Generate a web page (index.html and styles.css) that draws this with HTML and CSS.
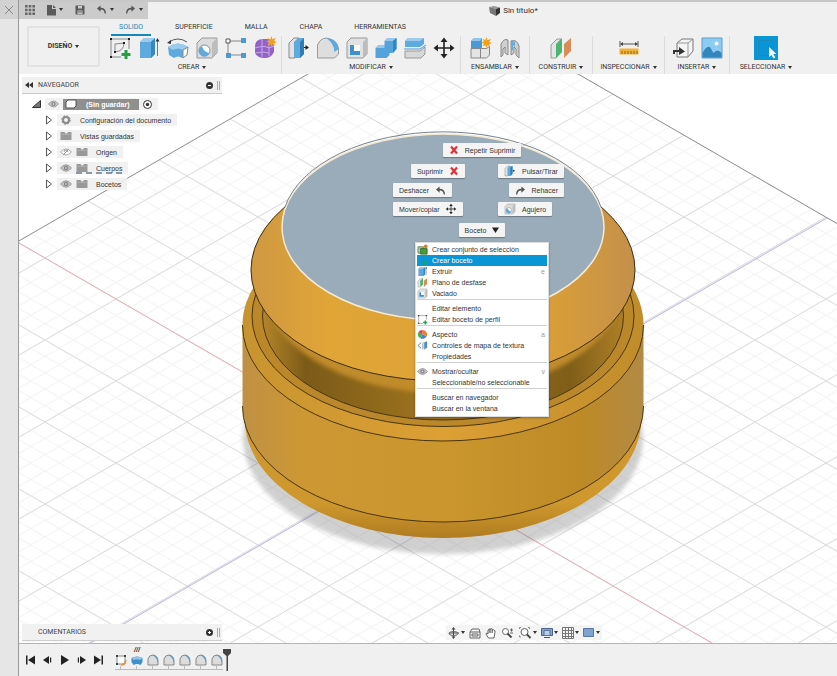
FILE: index.html
```html
<!DOCTYPE html>
<html lang="es">
  <head>
    <meta charset="UTF-8" />
    <meta name="viewport" content="width=device-width, initial-scale=1.0" />
    <title>Sin título*</title>
    <link rel="stylesheet" href="styles.css">
  </head>
  <body>
    <!-- shared icons -->
    <svg class="defs" aria-hidden="true">
      <symbol id="eye" viewBox="0 0 12 8">
        <path d="M0.5 4 Q6 -2.5 11.5 4 Q6 10.5 0.5 4z" fill="#c4c4c4" stroke="#999" />
        <circle cx="6" cy="4" r="2.3" fill="#888" />
        <circle cx="6" cy="4" r="0.8" fill="#eee" />
      </symbol>
      <symbol id="folder" viewBox="0 0 12 10">
        <path d="M0.5 1h4l1 1.5h1.5l1-1.5h3.5v8h-11z" fill="#999" />
        <path d="M0.5 3.5h11" stroke="#b5b5b5" stroke-width="0.7" />
      </symbol>
      <symbol id="arrow" viewBox="0 0 8 10">
        <path d="M1.5 1v8l5-4z" fill="#fff" stroke="#555" />
      </symbol>
      <symbol id="undo" viewBox="0 0 12 10">
        <path d="M5 0.5L1 4l4 3.5V5q4-0.5 4.5 4.5h1.5Q11 3 5 3z" fill="#555" />
      </symbol>
      <symbol id="redo" viewBox="0 0 12 10">
        <path d="M7 0.5L11 4L7 7.5V5Q3 4.5 2.5 9.5H1Q1 3 7 3z" fill="#555" />
      </symbol>
      <symbol id="cross" viewBox="0 0 10 10">
        <path d="M2 1.5L8 8.5M8 1.5L2 8.5" stroke="#e0303a" stroke-width="2.2" />
      </symbol>
      <symbol id="move" viewBox="0 0 24 24">
        <path d="M12 4v16M4 12h16" stroke="#222" stroke-width="1.6" />
        <path d="M12 1.5l3.5 4.5h-7zM12 22.5l3.5-4.5h-7zM1.5 12l4.5-3.5v7zM22.5 12l-4.5-3.5v7z" fill="#222" />
      </symbol>
      <symbol id="extrude" viewBox="0 0 24 24">
        <path d="M3 6l4-4h11v16l-4 4H3z" fill="#5ea9de" />
        <path d="M3 6l4-4h11l-4 4z" fill="#9bccee" />
        <path d="M14 6l4-4v16l-4 4z" fill="#3787c0" />
        <path d="M20.5 20V5" stroke="#777" />
        <path d="M20.5 2l2 3.5h-4z" fill="#333" />
      </symbol>
      <symbol id="press" viewBox="0 0 24 24">
        <path d="M2 7l5-5h5v16l-4 4H2z" fill="#e2e2e2" stroke="#8a8a8a" />
        <path d="M7 6l4-4h6v16l-4 4H7z" fill="#5ea9de" />
        <path d="M13 6l4-4v16l-4 4z" fill="#2f7cb8" />
        <path d="M17 11.5h2" stroke="#222" />
        <path d="M18.5 9l3.5 2.5-3.5 2.5z" fill="#222" />
      </symbol>
      <symbol id="hole" viewBox="0 0 24 24">
        <path d="M2 7l5-5h15v15l-5 5H2z" fill="#dcdcdc" stroke="#999" />
        <path d="M17 7l5-5v15l-5 5z" fill="#bdbdbd" />
        <circle cx="9.5" cy="14.5" r="5.5" fill="#fff" stroke="#888" />
        <path d="M7 10a5.5 5.5 0 1 0 7.500 7q-6-1-7.500-7z" fill="#5ea9de" />
      </symbol>
      <symbol id="shell" viewBox="0 0 24 24">
        <path d="M2 6l4-4h16v16l-4 4H2z" fill="#e2e2e2" stroke="#999" />
        <path d="M18 6l4-4v16l-4 4z" fill="#bdbdbd" />
        <path d="M5 9h10v10H5z" fill="#fff" />
        <path d="M5 9h4v6h6v4H5z" fill="#3f90cb" />
      </symbol>
      <symbol id="sketch" viewBox="0 0 24 24">
        <path d="M3.5 3.5h17v9M3.5 3.5v17h10" fill="none" stroke="#666" />
        <path d="M2 2h3v3H2zM19 2h3v3h-3zM2 19h3v3H2z" fill="#444" />
        <path d="M18 14v9M13.5 18.5h9" stroke="#27a045" stroke-width="3" />
      </symbol>
      <symbol id="planes" viewBox="0 0 24 24">
        <path d="M2 9l6-6h4v13l-5 6H2z" fill="#e4e4e4" stroke="#999" />
        <path d="M7 8l6-6v14l-6 6z" fill="#4cb574" />
        <path d="M15 8l7-6v13l-7 7z" fill="#d68d56" />
      </symbol>
      <symbol id="fillet" viewBox="0 0 12 12">
        <path d="M1 11V5Q2 1 6 1q5 1 5 6v4z" fill="#dcdcdc" stroke="#888" />
        <path d="M5 1q6 0 6 6v2q-1-6-6-8z" fill="#4a98ce" />
      </symbol>
      <symbol id="spark" viewBox="0 0 10 10">
        <path d="M5 0l1 3 3-1.5L7.5 4.5 10 5.5 7.3 6.5 8.5 9 6 7.5 5 10 4 7.5 1.5 8.5 2.7 6 0 5 2.7 4 1.5 1.5 4 3z" fill="#f0a11e" />
      </symbol>
    </svg>

    <div class="app">
      <aside class="strip">
        <button class="close" aria-label="Cerrar">
          <svg width="10" height="10" viewBox="0 0 10 10"><path d="M1 1l8 8M9 1L1 9" stroke="#888" /></svg>
        </button>
      </aside>

      <div class="main">
        <header class="topbar">
          <div class="quick">
            <button aria-label="Panel de datos">
              <svg width="10" height="10" viewBox="0 0 10 10"><path d="M0 0h2.6v2.6H0zM3.7 0h2.6v2.6H3.7zM7.4 0H10v2.6H7.4zM0 3.7h2.6v2.6H0zM3.7 3.7h2.6v2.6H3.7zM7.4 3.7H10v2.6H7.4zM0 7.4h2.6V10H0zM3.7 7.4h2.6V10H3.7zM7.4 7.4H10V10H7.4z" fill="#666" /></svg>
            </button>
            <button aria-label="Archivo">
              <svg width="10" height="12" viewBox="0 0 10 12"><path d="M1 1h5v4h4v6.5H1zM7 1l3 3H7z" fill="#5a5a5a" /></svg>
              <span class="caret"></span>
            </button>
            <button aria-label="Guardar">
              <svg width="10" height="10" viewBox="0 0 10 10"><path d="M0.5 0.5h9v9h-9z" fill="#5a5a5a" /><path d="M3 1h4v2.5H3zM2.5 5.5h5V9h-5z" fill="#cbcbcb" /><path d="M3 7h4" stroke="#5a5a5a" /></svg>
            </button>
            <button aria-label="Deshacer">
              <svg width="11" height="9"><use href="#undo" /></svg>
              <span class="caret"></span>
            </button>
            <button aria-label="Rehacer">
              <svg width="11" height="9"><use href="#redo" /></svg>
              <span class="caret"></span>
            </button>
          </div>
          <h1 class="title">
            <svg width="11" height="10" viewBox="0 0 11 10"><path d="M0 1l5-1 6 1.5-4 1.500z" fill="#999" /><path d="M0 1l7 2v7L1 7z" fill="#777" /><path d="M7 3l4-1.5V7L7 10z" fill="#333" /></svg>
            Sin título*
          </h1>
        </header>

        <div class="ribbon">
          <button class="workspace">DISEÑO <span class="caret"></span></button>
          <div class="ribbon-body">
            <nav class="tabs">
              <a href="#" class="active">SOLIDO</a>
              <a href="#">SUPERFICIE</a>
              <a href="#">MALLA</a>
              <a href="#">CHAPA</a>
              <a href="#">HERRAMIENTAS</a>
            </nav>
            <div class="groups">
              <section class="group">
                <div class="tools">
                  <button aria-label="Crear boceto"><svg viewBox="0 0 24 24"><path d="M3 3h18v10M3 3v18h10" fill="none" stroke="#888" /><path d="M7 16V8l9-1q0 8-9 9" fill="none" stroke="#888" /><path d="M2 2h2v2H2zM20 2h2v2h-2zM2 20h2v2H2zM6 15h2v2H6zM15 6h2v2h-2z" fill="#222" /><path d="M18 14v9M13.5 18.5h9" stroke="#27a045" stroke-width="3" /></svg></button>
                  <button aria-label="Extruir"><svg><use href="#extrude" /></svg></button>
                  <button aria-label="Revolución"><svg viewBox="0 0 24 24"><path d="M2 11q10-7 20 0l-1 8-5 3q-4-3-8 0l-5-3z" fill="#5ea9de" /><path d="M2 11q10-7 20 0l-5 3q-5-3-10 0z" fill="#9bccee" /><path d="M17 14l5-3-1 8-4 3z" fill="#fff" stroke="#888" /><path d="M3 6q9-6 18 0" fill="none" stroke="#555" /><path d="M1 7l4-3v4z" fill="#333" /></svg></button>
                  <button aria-label="Agujero"><svg><use href="#hole" /></svg></button>
                  <button aria-label="Patrón"><svg viewBox="0 0 24 24"><path d="M4 5h16M4 5v14h16" fill="none" stroke="#888" /><path d="M2 3h4v4H2z" fill="#fff" stroke="#555" /><path d="M17 2h5v5h-5zM2 17h5v5H2zM17 17h5v5h-5z" fill="#4a9bd4" /></svg></button>
                  <button aria-label="Crear forma"><svg viewBox="0 0 24 24"><path d="M2 10q0-6 7-7h6q6 3 6 9v4q-3 6-9 6-8 0-10-5z" fill="#9262c8" /><path d="M2 12q9-3 14 0l5-2M9 3v18M16 4v16M2 17q9-2 14 0" fill="none" stroke="#c9aaea" /><use href="#spark" x="13" y="0" width="11" height="11" /></svg></button>
                </div>
                <button class="label">CREAR <span class="caret"></span></button>
              </section>
              <section class="group">
                <div class="tools">
                  <button aria-label="Pulsar/Tirar"><svg><use href="#press" /></svg></button>
                  <button aria-label="Empalme"><svg viewBox="0 0 24 24"><path d="M1.5 22V9q3-7 9-7 11 2 12 11v5l-4 4z" fill="#dedede" stroke="#999" /><path d="M10 2q12 1 12.5 11l-4 3Q18 7 10 2z" fill="#5ea9de" /></svg></button>
                  <button aria-label="Vaciado"><svg><use href="#shell" /></svg></button>
                  <button aria-label="Combinar"><svg viewBox="0 0 24 24"><path d="M1.5 12l3-3h6V5l3-3h9v11l-4 4h-3v2l-3 3h-11z" fill="#55a3dc" /><path d="M10.5 5l3-3h9l-3.5 3zM1.5 12l3-3h6v3z" fill="#98c9ed" /><path d="M19 5l3.5-3v11l-3.5 4z" fill="#3684bf" /></svg></button>
                  <button aria-label="Dividir"><svg viewBox="0 0 24 24"><path d="M2 5l3-3h16v6l-4 3H2z" fill="#5ea9de" /><path d="M2 5l3-3h16l-4 3z" fill="#9bccee" /><path d="M2 15h15l5-4v7l-4 4H2z" fill="#d8d8d8" stroke="#999" /><path d="M1 13h16l6-4" fill="none" stroke="#4a9bd4" /></svg></button>
                  <button aria-label="Mover"><svg><use href="#move" /></svg></button>
                </div>
                <button class="label">MODIFICAR <span class="caret"></span></button>
              </section>
              <section class="group">
                <div class="tools">
                  <button aria-label="Nuevo componente"><svg viewBox="0 0 24 24"><path d="M2 5l3-3h8v10H2z" fill="#4a9bd4" /><path d="M2 5l3-3h8l-2 3z" fill="#8fc6ec" /><path d="M2 12.5h9.5V22H2zM11.5 12.5h6l3-2V19l-3 3h-6z" fill="#e4e4e4" stroke="#888" /><use href="#spark" x="12" y="1" width="11" height="11" /></svg></button>
                  <button aria-label="Unión"><svg viewBox="0 0 24 24"><path d="M3 8q3-6 7-4v15l-3-2v-6l-2 2v6l-2 2z" fill="#cfcfcf" stroke="#888" /><path d="M13 5q6-2 8 5v12l-3-3v-6l-2-2v6l-3 2z" fill="#cfcfcf" stroke="#888" /><path d="M13 4l4 2v5l-2-2v5l-2 1z" fill="#68aedc" /></svg></button>
                </div>
                <button class="label">ENSAMBLAR <span class="caret"></span></button>
              </section>
              <section class="group">
                <div class="tools">
                  <button aria-label="Plano de desfase"><svg><use href="#planes" /></svg></button>
                </div>
                <button class="label">CONSTRUIR <span class="caret"></span></button>
              </section>
              <section class="group">
                <div class="tools">
                  <button aria-label="Medir"><svg viewBox="0 0 24 24"><path d="M3 5v6M21 5v6M4 8h16" stroke="#555" /><path d="M3 8l3-2v4zM21 8l-3-2v4z" fill="#444" /><path d="M2.5 12.5h19v6h-19z" fill="#f2b134" /><path d="M5 15v3M8 15v3M11 15v3M14 15v3M17 15v3M20 15v3" stroke="#8c6312" /></svg></button>
                </div>
                <button class="label">INSPECCIONAR <span class="caret"></span></button>
              </section>
              <section class="group">
                <div class="tools">
                  <button aria-label="Insertar derivada"><svg viewBox="0 0 24 24"><path d="M6 7l5-4h11v12l-5 6H6z" fill="#f4f4f4" stroke="#777" /><path d="M6 7h11v14M17 7l5-4" fill="none" stroke="#999" /><path d="M2 18v-4h6v-3l6 4.5L8 19v-3H4v2z" fill="#333" /></svg></button>
                  <button aria-label="Lienzo"><svg viewBox="0 0 24 24"><path d="M2 2h20v20H2z" fill="#8ccbf3" stroke="#5b9cc9" /><circle cx="16.5" cy="7.5" r="2" fill="#fff" /><path d="M2.5 17q5-9 8-5l3 5q4-5 8 0v4.5h-19z" fill="#3585bd" /></svg></button>
                </div>
                <button class="label">INSERTAR <span class="caret"></span></button>
              </section>
              <section class="group">
                <div class="tools">
                  <button class="picked" aria-label="Seleccionar"><svg viewBox="0 0 24 24"><path d="M4.500 4.500h15v15h-15z" fill="none" stroke="#2c7fa8" stroke-dasharray="2 2" /><path d="M15 11v10l2.500-2 2 3.500 1.800-1-2-3.500h3z" fill="#fff" /></svg></button>
                </div>
                <button class="label">SELECCIONAR <span class="caret"></span></button>
              </section>
            </div>
          </div>
        </div>

        <main class="canvas">
          <svg class="scene" viewBox="19 74 818 569" preserveAspectRatio="xMidYMid slice" aria-hidden="true">
            <defs>
              <pattern id="minor" x="45" y="258" width="28.4" height="16.4" patternUnits="userSpaceOnUse">
                <path d="M0 0L28.4 16.4M0 16.4L28.4 0" stroke="#f1f1f1" />
              </pattern>
              <pattern id="major" x="45" y="258" width="142" height="82" patternUnits="userSpaceOnUse">
                <path d="M0 0L142 82M0 82L142 0" stroke="#dcdcdf" />
              </pattern>
              <linearGradient id="side" gradientUnits="userSpaceOnUse" x1="243" y1="0" x2="644" y2="0">
                <stop offset="0" stop-color="#bf9145" />
                <stop offset="0.15" stop-color="#cd9733" />
                <stop offset="0.5" stop-color="#cb962d" />
                <stop offset="0.85" stop-color="#bd8a27" />
                <stop offset="1" stop-color="#b38a45" />
              </linearGradient>
              <linearGradient id="lip" gradientUnits="userSpaceOnUse" x1="243" y1="0" x2="644" y2="0">
                <stop offset="0" stop-color="#c8942f" />
                <stop offset="0.5" stop-color="#dca034" />
                <stop offset="1" stop-color="#c08c2b" />
              </linearGradient>
              <linearGradient id="cone" gradientUnits="userSpaceOnUse" x1="251" y1="0" x2="635" y2="0">
                <stop offset="0" stop-color="#cf9842" />
                <stop offset="0.2" stop-color="#e0a537" />
                <stop offset="0.75" stop-color="#dca035" />
                <stop offset="1" stop-color="#c4904a" />
              </linearGradient>
              <linearGradient id="neck" gradientUnits="userSpaceOnUse" x1="262" y1="0" x2="624" y2="0">
                <stop offset="0" stop-color="#b58529" />
                <stop offset="0.12" stop-color="#7c5b18" />
                <stop offset="0.5" stop-color="#a0751f" />
                <stop offset="0.85" stop-color="#7f5e18" />
                <stop offset="1" stop-color="#ae7f27" />
              </linearGradient>
              <linearGradient id="foot" x1="0" y1="0" x2="0" y2="1">
                <stop offset="0.85" stop-color="#cf982e" />
                <stop offset="1" stop-color="#b07c20" />
              </linearGradient>
              <filter id="soft" x="-10%" y="-10%" width="120%" height="120%"><feGaussianBlur stdDeviation="2" /></filter>
            </defs>

            <rect x="-600" y="-400" width="2100" height="1500" fill="#fff" />
            <path d="M443-4L1643 689V1300H-757V689z" fill="url(#minor)" />
            <path d="M443-4L1643 689V1300H-757V689z" fill="url(#major)" />
            <path d="M-757 689L443-4L1643 689" fill="none" stroke="#8e8e8e" />
            <path d="M19 243L1140 890" stroke="#eab0b4" />
            <path d="M-320 880L827 218" stroke="#b4b6e2" />

            <!-- ground shadow -->
            <ellipse cx="443" cy="438" rx="200" ry="116" fill="#666" opacity="0.3" filter="url(#soft)" />

            <!-- base -->
            <ellipse cx="443" cy="420" rx="198" ry="118" fill="url(#foot)" />
            <path d="M242.5 325V406A200.5 116 0 0 0 643.5 406V325z" fill="url(#side)" />
            <path d="M242.5 406A200.5 116 0 0 0 643.5 406" fill="none" stroke="#4a3510" />
            <ellipse cx="443" cy="325" rx="200.5" ry="116" fill="url(#lip)" />
            <path d="M242.5 325A200.5 116 0 0 0 643.5 325" fill="none" stroke="#4a3510" />
            <ellipse cx="443" cy="316" rx="191" ry="110.5" fill="#ba882b" stroke="#4a3510" />
            <ellipse cx="443" cy="316" rx="180.5" ry="104" fill="url(#neck)" stroke="#4a3510" />
            <ellipse cx="443" cy="283" rx="181" ry="110" fill="#c08b2b" filter="url(#soft)" />

            <!-- cap -->
            <ellipse cx="443" cy="270" rx="192" ry="111" fill="url(#cone)" stroke="#3d2c0e" />
            <ellipse cx="443" cy="227" rx="161" ry="93" fill="#9aabb9" stroke="#f4ead2" stroke-width="1.5" />
            <path d="M285 207A161 93 0 0 1 601 207" fill="none" stroke="#75838e" />
          </svg>

          <section class="browser">
            <h2 class="panel-head">
              <svg width="8" height="6" viewBox="0 0 8 6"><path d="M4 0v6L0 3zM8 0v6L4 3z" fill="#333" /></svg>
              <span>NAVEGADOR</span>
              <button class="dot" aria-label="Contraer"><svg width="7" height="7" viewBox="0 0 7 7"><circle cx="3.5" cy="3.5" r="3.5" fill="#333" /><path d="M2 3.5h3" stroke="#fff" /></svg></button>
              <i class="grip"></i>
            </h2>
            <ul class="tree">
              <li class="root">
                <svg width="9" height="8" viewBox="0 0 9 8"><path d="M8.5 0.5v7h-8z" fill="#777" stroke="#333" /></svg>
                <span class="node">
                  <svg width="11" height="8"><use href="#eye" /></svg>
                  <span class="doc">
                    <svg width="12" height="10" viewBox="0 0 12 10"><path d="M1 3l2-2h8v6l-2 2H1z" fill="#fff" stroke="#555" /></svg>
                    (Sin guardar)
                  </span>
                  <svg width="9" height="9" viewBox="0 0 9 9"><circle cx="4.5" cy="4.5" r="4" fill="#fff" stroke="#333" /><circle cx="4.5" cy="4.5" r="1.7" fill="#333" /></svg>
                </span>
              </li>
              <li>
                <svg width="8" height="10"><use href="#arrow" /></svg>
                <span class="node">
                  <svg width="12" height="10" viewBox="0 0 12 10"><circle cx="6" cy="5" r="3" fill="none" stroke="#8a8a8a" stroke-width="2" /><circle cx="6" cy="5" r="4.3" fill="none" stroke="#8a8a8a" stroke-dasharray="1.7 1.7" /></svg>
                  <span class="name">Configuración del documento</span>
                </span>
              </li>
              <li>
                <svg width="8" height="10"><use href="#arrow" /></svg>
                <span class="node"><svg width="12" height="10"><use href="#folder" /></svg><span class="name">Vistas guardadas</span></span>
              </li>
              <li>
                <svg width="8" height="10"><use href="#arrow" /></svg>
                <span class="node">
                  <svg width="12" height="8" viewBox="0 0 12 8"><path d="M0.5 4Q6-2 11.5 4Q6 10 0.5 4z" fill="#fff" stroke="#aaa" /><path d="M4 4a2 2 0 0 1 4 0M3 7l6-6" fill="none" stroke="#999" /></svg>
                  <svg width="12" height="10"><use href="#folder" /></svg><span class="name">Origen</span>
                </span>
              </li>
              <li>
                <svg width="8" height="10"><use href="#arrow" /></svg>
                <span class="node">
                  <svg width="12" height="8"><use href="#eye" /></svg>
                  <span class="dragged"><svg width="12" height="10"><use href="#folder" /></svg><span class="name">Cuerpos</span></span>
                </span>
              </li>
              <li>
                <svg width="8" height="10"><use href="#arrow" /></svg>
                <span class="node">
                  <svg width="12" height="8"><use href="#eye" /></svg>
                  <svg width="12" height="10"><use href="#folder" /></svg><span class="name">Bocetos</span>
                </span>
              </li>
            </ul>
          </section>

          <div class="marking">
            <button class="chip"><svg width="10" height="10"><use href="#cross" /></svg>Repetir Suprimir</button>
            <div class="wheel">
              <button class="chip end">Suprimir<svg width="10" height="10"><use href="#cross" /></svg></button>
              <button class="chip"><svg width="12" height="12"><use href="#press" /></svg>Pulsar/Tirar</button>
              <button class="chip">Deshacer<svg width="11" height="9"><use href="#undo" /></svg></button>
              <button class="chip end"><svg width="11" height="9"><use href="#redo" /></svg>Rehacer</button>
              <button class="chip">Mover/copiar<svg width="12" height="12"><use href="#move" /></svg></button>
              <button class="chip"><svg width="12" height="12"><use href="#hole" /></svg>Agujero</button>
            </div>
            <button class="chip">Boceto<svg width="7" height="6" viewBox="0 0 7 6"><path d="M0 0.5h7L3.5 6z" fill="#222" /></svg></button>

            <ul class="menu">
              <li><button><svg viewBox="0 0 12 12"><path d="M1 3h6v7H1z" fill="#a9c6a4" stroke="#6a8b66" /><path d="M4 5h7v6H4z" fill="#4b9b3c" stroke="#2d6e27" /><circle cx="9.5" cy="2.5" r="2" fill="#e0762a" /></svg>Crear conjunto de selección</button></li>
              <li><button class="current"><svg viewBox="0 0 12 12"><path d="M8 5v6M5 8h6" stroke="#12a08a" stroke-width="1.5" /></svg>Crear boceto</button></li>
              <li><button><svg><use href="#extrude" /></svg>Extruir<kbd>e</kbd></button></li>
              <li><button><svg><use href="#planes" /></svg>Plano de desfase</button></li>
              <li><button><svg><use href="#shell" /></svg>Vaciado</button></li>
              <li class="line"></li>
              <li><button><svg></svg>Editar elemento</button></li>
              <li><button><svg><use href="#sketch" /></svg>Editar boceto de perfil</button></li>
              <li class="line"></li>
              <li><button><svg viewBox="0 0 12 12"><path d="M6 6V1a5 5 0 0 1 4.5 7z" fill="#ef7d2c" /><path d="M6 6l4.5 2a5 5 0 0 1-7 2z" fill="#4a80d8" /><path d="M6 6l-2.5 4A5 5 0 0 1 1.5 3.5z" fill="#43b35a" /><path d="M6 6L1.5 3.5A5 5 0 0 1 6 1z" fill="#e23c52" /></svg>Aspecto<kbd>a</kbd></button></li>
              <li><button><svg viewBox="0 0 12 12"><path d="M4.5 3L1 6l3.5 3" fill="none" stroke="#777" /><path d="M6 4l2-2v6l-2 2z" fill="#ddd" stroke="#888" stroke-width="0.5" /><path d="M8 3l3-2v7l-3 3z" fill="#3f8fd0" /></svg>Controles de mapa de textura</button></li>
              <li><button><svg></svg>Propiedades</button></li>
              <li class="line"></li>
              <li><button><svg><use href="#eye" /></svg>Mostrar/ocultar<kbd>v</kbd></button></li>
              <li><button><svg></svg>Seleccionable/no seleccionable</button></li>
              <li class="line"></li>
              <li><button><svg></svg>Buscar en navegador</button></li>
              <li><button><svg></svg>Buscar en la ventana</button></li>
            </ul>
          </div>

          <div class="canvas-foot">
            <h2 class="panel-head">
              <span>COMENTARIOS</span>
              <button class="dot" aria-label="Añadir comentario"><svg width="7" height="7" viewBox="0 0 7 7"><circle cx="3.5" cy="3.5" r="3.5" fill="#333" /><path d="M2 3.5h3M3.5 2v3" stroke="#fff" /></svg></button>
              <i class="grip"></i>
            </h2>
            <div class="viewbar">
              <button aria-label="Órbita"><svg width="12" height="12" viewBox="0 0 12 12"><path d="M5.5 1v10M1 6h10" stroke="#444" /><ellipse cx="5.5" cy="6.5" rx="4.5" ry="2" fill="none" stroke="#666" /><path d="M5.5 0l2 2.5h-4zM5.5 12l2-2.5h-4z" fill="#444" /></svg><span class="caret"></span></button>
              <button aria-label="Mirar a"><svg width="12" height="12" viewBox="0 0 12 12"><path d="M1 5h10v6H1zM3 7h6v2H3zM1 5l2-3h7l1 3" fill="none" stroke="#666" /></svg></button>
              <button aria-label="Encuadre"><svg width="12" height="12" viewBox="0 0 12 12"><path d="M3.5 11L1 7q0-2 2 0V3q1-1 1.3 0V2q1-1 1.5 0 1-1 1.5 0v1q1.5-1 1.7 0.5 1.5 0 1 1.5L9 11zM4.3 3v3M5.8 2v4M7.3 3v3" fill="#fff" stroke="#444" stroke-width="0.8" /></svg></button>
              <button aria-label="Zoom"><svg width="13" height="12" viewBox="0 0 13 12"><circle cx="4.5" cy="4.5" r="3" fill="#fff" stroke="#666" /><path d="M6.5 6.5l4 4" stroke="#444" stroke-width="1.8" /><path d="M9 3h3M10.5 1.5v3M9 6h3" stroke="#444" stroke-width="0.8" /></svg></button>
              <button aria-label="Ajustar"><svg width="13" height="12" viewBox="0 0 13 12"><circle cx="5.5" cy="5" r="3.5" fill="#fff" stroke="#666" /><path d="M8 7.5l3.5 3.5" stroke="#444" stroke-width="1.8" /><path d="M0.5 2V0.5H2M9 0.5h1.5V2M0.5 8.5V10H2" fill="none" stroke="#888" /></svg><span class="caret"></span></button>
              <button aria-label="Visualización"><svg width="12" height="12" viewBox="0 0 12 12"><path d="M0.5 1.5h11v7h-11z" fill="#86a6cf" stroke="#49638a" /><path d="M3 3.5h6v5H3z" fill="#b9cde8" stroke="#5a759c" /><path d="M3 10.5h6" stroke="#555" /></svg><span class="caret"></span></button>
              <button aria-label="Rejilla"><svg width="12" height="12" viewBox="0 0 12 12"><path d="M0.5 0.5h11v11h-11zM3.5 1v10M6.5 1v10M9.5 1v10M1 3.5h10M1 6.5h10M1 9.5h10" fill="none" stroke="#777" /></svg><span class="caret"></span></button>
              <button aria-label="Ventanas"><svg width="12" height="10" viewBox="0 0 12 10"><path d="M0.5 0.5h10v8h-10z" fill="#7ea3d0" stroke="#57779f" /></svg><span class="caret"></span></button>
            </div>
          </div>
        </main>

        <footer class="timeline">
          <div class="player">
            <button aria-label="Inicio"><svg width="9" height="10" viewBox="0 0 9 10"><path d="M0 0.5h1.5v9H0zM9 0.5v9L2 5z" fill="#222" /></svg></button>
            <button aria-label="Atrás"><svg width="9" height="10" viewBox="0 0 9 10"><path d="M6 1v8L0 5zM7 2.5h1.2v5H7z" fill="#222" /></svg></button>
            <button aria-label="Reproducir"><svg width="9" height="10" viewBox="0 0 9 10"><path d="M1 0v10l8-5z" fill="#222" /></svg></button>
            <button aria-label="Adelante"><svg width="9" height="10" viewBox="0 0 9 10"><path d="M3 1v8l6-4zM0.8 2.5H2v5H0.8z" fill="#222" /></svg></button>
            <button aria-label="Fin"><svg width="9" height="10" viewBox="0 0 9 10"><path d="M0 0.5v9L7 5zM7.5 0.5H9v9H7.5z" fill="#222" /></svg></button>
          </div>
          <div class="steps">
            <button aria-label="Boceto"><svg width="12" height="12" viewBox="0 0 12 12"><path d="M2 2h8v8H2z" fill="#fff" stroke="#888" /><path d="M1 1h2v2H1zM9 1h2v2H9zM1 9h2v2H1z" fill="#444" /><path d="M6 11q4 0 5-5" fill="none" stroke="#e8913a" stroke-width="1.5" /></svg></button>
            <button class="marked" aria-label="Revolución"><svg width="12" height="12" viewBox="0 0 12 12"><path d="M0.5 4q5.5-3 11 0v4l-2 3q-3.5-2-7 0l-2-3z" fill="#3f8fcb" /><path d="M0.5 4q5.5-3 11 0l-2.5 2q-3-1.5-6 0z" fill="#94c6ea" /></svg></button>
            <button aria-label="Empalme 1"><svg width="12" height="12"><use href="#fillet" /></svg></button>
            <button aria-label="Empalme 2"><svg width="12" height="12"><use href="#fillet" /></svg></button>
            <button aria-label="Empalme 3"><svg width="12" height="12"><use href="#fillet" /></svg></button>
            <button aria-label="Empalme 4"><svg width="12" height="12"><use href="#fillet" /></svg></button>
            <button aria-label="Empalme 5"><svg width="12" height="12"><use href="#fillet" /></svg></button>
          </div>
          <svg class="marker" width="8" height="22" viewBox="0 0 8 22"><path d="M0 0h8v4L5 7v15H3.5V7L0 4z" fill="#444" /></svg>
        </footer>
      </div>
    </div>
  </body>
</html>
```
FILE: styles.css
```css
* {
  padding: 0;
  margin: 0;
  box-sizing: border-box;
}
body {
  font-family: "Liberation Sans", Arial, sans-serif;
  font-size: 7px;
  line-height: 11px;
  color: #333;
  background: #f0f0f0;
}
button {
  font: inherit;
  color: inherit;
  background: none;
  border: none;
  display: flex;
  align-items: center;
  justify-content: center;
}
ul {
  list-style: none;
}
svg {
  display: block;
  flex: none;
}
.defs {
  position: absolute;
  width: 0;
  height: 0;
}
.caret {
  border: 2px solid transparent;
  border-top: 3px solid #333;
  border-bottom: none;
  margin-left: 3px;
}
.app {
  display: flex;
  min-height: 100vh;
}
.strip {
  width: 19px;
  flex: none;
  background: #e6e6e6;
  border-right: 1px solid #999;
}
.close {
  width: 18px;
  height: 19px;
  background: #d2d2d2;
}
.main {
  flex: 1;
  min-width: 0;
  display: flex;
  flex-direction: column;
}

/* top bar */
.topbar {
  display: flex;
  height: 19px;
  border-top: 2px solid #c8c8c8;
}
.quick {
  width: 129px;
  flex: none;
  display: flex;
  align-items: center;
  justify-content: space-between;
  padding: 0 5px 2px 6px;
  background: #cbcbcb;
}
.title {
  flex: 1;
  display: flex;
  align-items: center;
  justify-content: center;
  gap: 3px;
  padding-left: 42px;
  font: 8px/16px Roboto, sans-serif;
}

/* ribbon */
.ribbon {
  display: flex;
  height: 55px;
  font-family: Roboto, sans-serif;
}
.workspace {
  width: 73px;
  height: 41px;
  flex: none;
  margin: 7px 3px 0 8px;
  border: 2px solid #e2e2e2;
  border-radius: 2px;
  font-weight: bold;
}
.ribbon-body {
  flex: 1;
}
.tabs {
  display: flex;
  gap: 16px;
  padding-left: 8px;
}
.tabs a {
  height: 17px;
  line-height: 16px;
  padding: 0 8px;
  color: #333;
  text-decoration: none;
}
.tabs .active {
  color: #1787b5;
  border-bottom: 2px solid #1787b5;
}
.groups {
  display: grid;
  grid-template-columns: 179px 179px 69px 63px 72px 65px 72px;
}
.group {
  display: flex;
  flex-direction: column;
  align-items: center;
  border-right: 1px solid #dcdcdc;
}
.group:last-child {
  border: none;
}
.tools {
  display: flex;
  gap: 5px;
}
.tools button {
  width: 24px;
  height: 24px;
}
.tools svg {
  width: 24px;
  height: 24px;
}
.tools .picked {
  background: #0a96d6;
}
.label {
  height: 14px;
  white-space: nowrap;
}

/* canvas */
.canvas {
  flex: 1;
  position: relative;
  display: flex;
  flex-direction: column;
  justify-content: space-between;
  overflow: hidden;
}
.scene {
  position: absolute;
  width: 100%;
  height: 100%;
}
.browser,
.canvas-foot {
  position: relative;
}
.browser {
  padding: 3px;
}
.panel-head {
  width: 200px;
  height: 17px;
  display: flex;
  align-items: center;
  padding: 0 2px 0 3px;
  font: 7px/16px Roboto, sans-serif;
  color: #444;
  background: #f1f1f1;
  border-bottom: 1px solid #ccc;
}
.panel-head span {
  position: absolute;
  left: 19px;
}
.dot {
  margin-left: auto;
}
.grip {
  width: 3px;
  height: 9px;
  margin-left: 4px;
  border: 1px solid #aaa;
  border-width: 0 1px;
}
.tree {
  padding: 2px 0 0 23px;
}
.tree li {
  display: flex;
  align-items: center;
  gap: 4px;
  height: 16px;
}
.tree .root {
  margin-left: -13px;
}
.node {
  display: flex;
  align-items: center;
  gap: 4px;
  height: 12px;
  padding: 0 6px 0 3px;
  background: rgba(240, 240, 240, 0.9);
}
.name {
  padding-left: 4px;
}
.doc {
  display: flex;
  align-items: center;
  gap: 9px;
  width: 76px;
  height: 11px;
  padding-left: 2px;
  font-weight: bold;
  color: #fff;
  background: #8f8f8f;
}
.dragged {
  display: flex;
  gap: 4px;
  height: 11px;
  border-bottom: 2px dashed #8b98a8;
}

/* marking menu */
.marking {
  position: absolute;
  top: 69px;
  left: calc(50% - 35px);
  width: 178px;
  display: flex;
  flex-direction: column;
  align-items: center;
}
.wheel {
  align-self: flex-start;
  display: grid;
  grid-template-columns: 72px 66px;
  column-gap: 33px;
  row-gap: 5px;
  justify-items: start;
  margin: 7px 0;
}
.wheel .end {
  justify-self: end;
}
.chip {
  height: 14px;
  gap: 6px;
  padding: 0 6px;
  background: #f4f4f4;
  border-radius: 1px;
  box-shadow: 0 1px 1px rgba(0, 0, 0, 0.3);
  white-space: nowrap;
}
.menu {
  width: 134px;
  margin-top: 5px;
  padding: 1px 1px 2px;
  background: #fff;
  border: 1px solid #ddd;
  box-shadow: 0 1px 2px rgba(0, 0, 0, 0.3);
}
.menu button {
  width: 100%;
  height: 11px;
  justify-content: flex-start;
  gap: 4px;
  white-space: nowrap;
}
.menu svg {
  width: 11px;
  height: 11px;
}
.menu .current {
  color: #fff;
  background: #0896d7;
}
.menu kbd {
  margin-left: auto;
  padding-right: 2px;
  font: inherit;
  color: #999;
}
.line {
  height: 4px;
  border-top: 1px solid #d0d0d0;
}

/* bottom of the canvas */
.canvas-foot {
  display: flex;
  align-items: center;
  padding: 0 3px 2px;
}
.viewbar {
  display: flex;
  align-items: center;
  justify-content: space-between;
  width: 156px;
  height: 15px;
  margin-left: 224px;
  padding: 0 2px;
  background: rgba(243, 243, 243, 0.9);
}
.viewbar .caret {
  margin-left: 1px;
}

/* timeline */
.timeline {
  display: flex;
  align-items: center;
  height: 33px;
  padding-left: 7px;
  border-top: 1px solid #b5b5b5;
}
.player {
  display: flex;
  gap: 8px;
}
.steps {
  display: flex;
  gap: 4px;
  margin-left: 12px;
  height: 20px;
  border-bottom: 1px solid #bbb;
}
.steps button {
  position: relative;
}
.steps button::after {
  content: "";
  position: absolute;
  bottom: 0;
  left: 5px;
  height: 3px;
  border-left: 1px solid #bbb;
}
.marked::before {
  content: "///";
  position: absolute;
  top: -6px;
  font-weight: bold;
  font-style: italic;
}
```
